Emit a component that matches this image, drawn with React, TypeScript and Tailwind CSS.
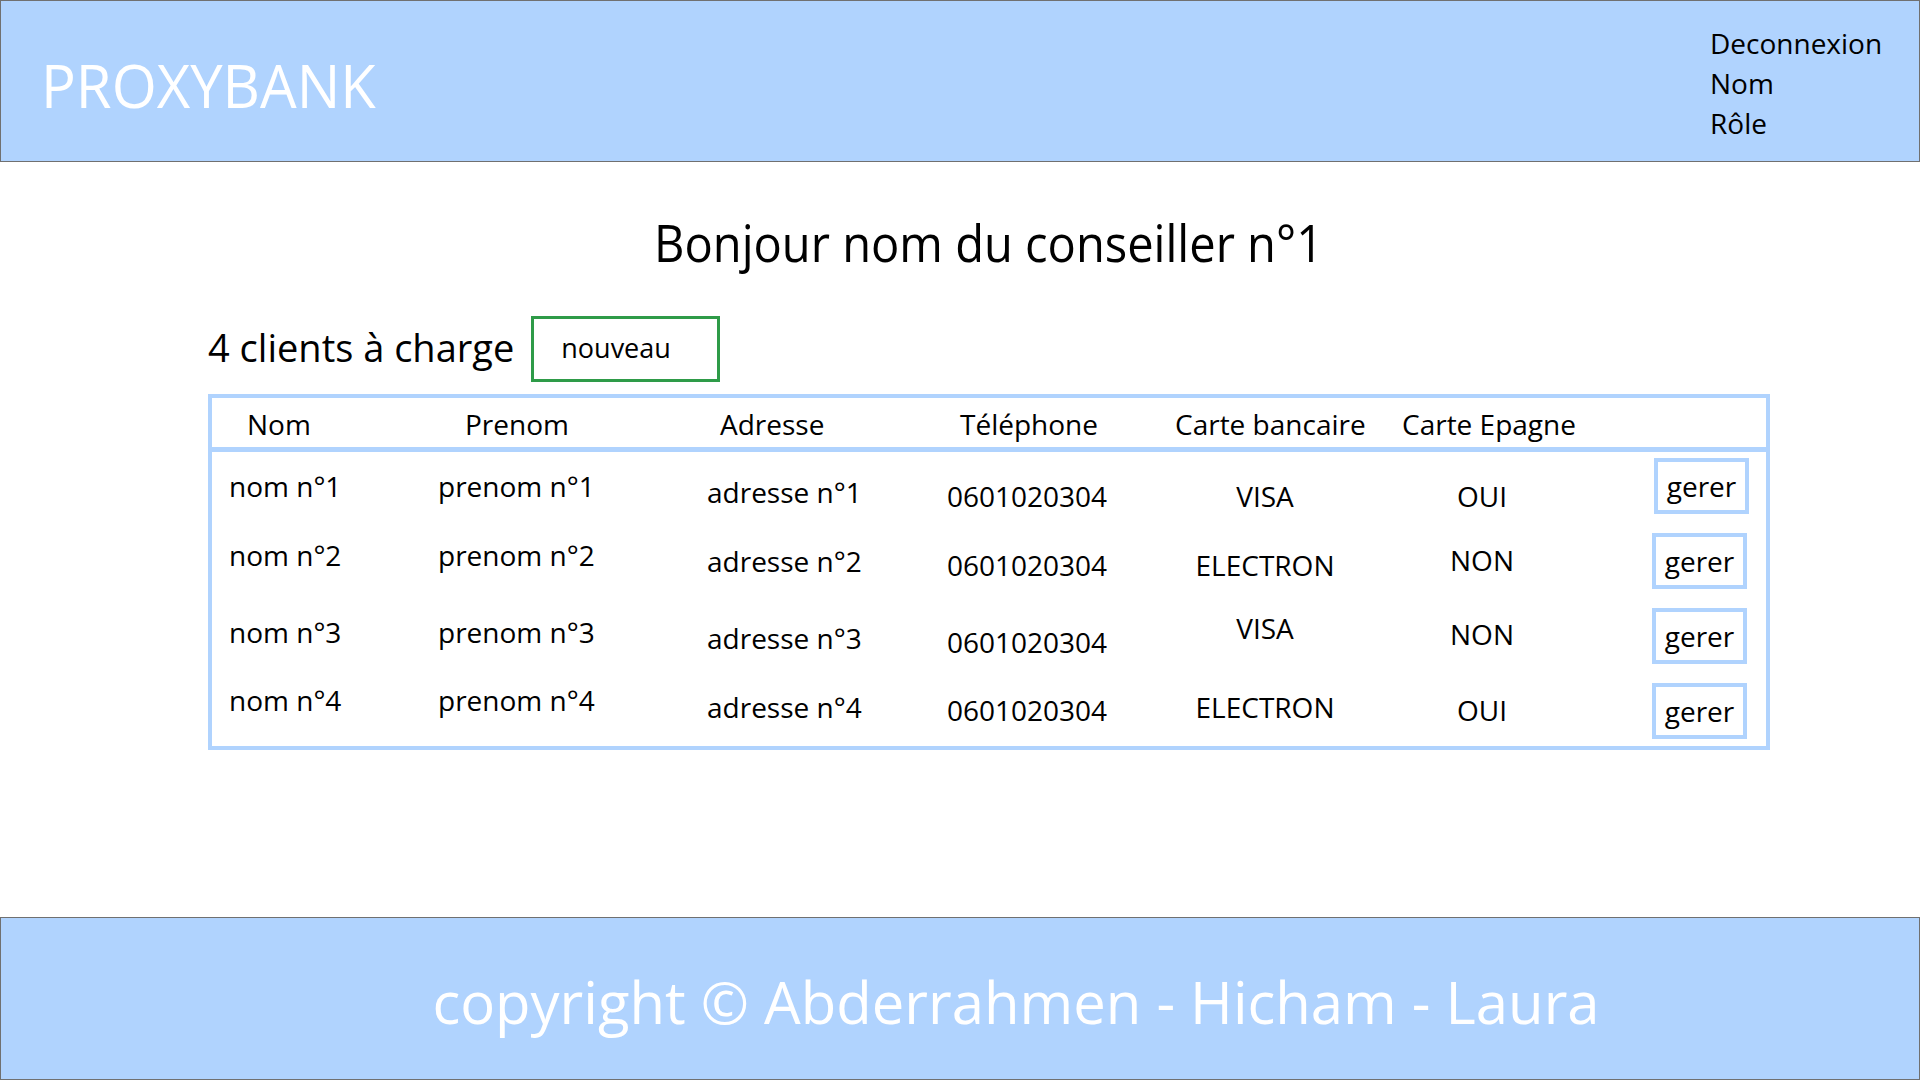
const HEADERS = [
  { label: 'Nom', cls: 'w-[253px] pl-[35px]' },
  { label: 'Prenom', cls: 'w-[255px]' },
  { label: 'Adresse', cls: 'w-[240px]' },
  { label: 'Téléphone', cls: 'w-[215px]' },
  { label: 'Carte bancaire', cls: 'w-[227px]' },
  { label: 'Carte Epagne', cls: 'flex-1' },
];

// vertical offsets follow the mockup, which is not perfectly aligned
const CLIENTS = [
  {
    nom: 'nom n°1', prenom: 'prenom n°1', adresse: 'adresse n°1', tel: '0601020304', carte: 'VISA', epargne: 'OUI',
    mt: ['mt-[14px]', 'mt-[14px]', 'mt-[20px]', 'mt-[24px]', 'mt-[24px]', 'mt-[24px]'], btn: 'ml-[54px]',
  },
  {
    nom: 'nom n°2', prenom: 'prenom n°2', adresse: 'adresse n°2', tel: '0601020304', carte: 'ELECTRON', epargne: 'NON',
    mt: ['mt-[8px]', 'mt-[8px]', 'mt-[14px]', 'mt-[18px]', 'mt-[18px]', 'mt-[13px]'], btn: 'ml-[52px]',
  },
  {
    nom: 'nom n°3', prenom: 'prenom n°3', adresse: 'adresse n°3', tel: '0601020304', carte: 'VISA', epargne: 'NON',
    mt: ['mt-[10px]', 'mt-[10px]', 'mt-[16px]', 'mt-[20px]', 'mt-[6px]', 'mt-[12px]'], btn: 'ml-[52px]',
  },
  {
    nom: 'nom n°4', prenom: 'prenom n°4', adresse: 'adresse n°4', tel: '0601020304', carte: 'ELECTRON', epargne: 'OUI',
    mt: ['mt-[3px]', 'mt-[3px]', 'mt-[10px]', 'mt-[13px]', 'mt-[10px]', 'mt-[13px]'], btn: 'ml-[52px]',
  },
];

function Header() {
  return (
    <header className="h-[162px] bg-[#b0d3fe] border border-[#707070] flex justify-between">
      <div className="pt-[53px] pl-[40px]">
        <span className="inline-block origin-left scale-x-[0.95] text-[61px] leading-none text-white">PROXYBANK</span>
      </div>
      <nav className="pt-[22px] w-[209px] flex flex-col text-[28px] leading-[40px] text-black">
        <span>Deconnexion</span>
        <span>Nom</span>
        <span>Rôle</span>
      </nav>
    </header>
  );
}

function ClientsTable() {
  return (
    <div className="mt-[12px] border-4 border-[#b0d3fe]">
      <div className="h-[54px] pt-[3px] border-b-[5px] border-[#b0d3fe] flex items-center text-[28px] leading-[28px]">
        {HEADERS.map((h) => (
          <span key={h.label} className={h.cls}>{h.label}</span>
        ))}
      </div>
      <div className="pt-[6px] pb-[7px] flex flex-col gap-[19px] text-[28px] leading-[28px]">
        {CLIENTS.map((c) => (
          <div key={c.nom} className="h-[56px] flex items-start">
            <div className={`w-[226px] pl-[17px] ${c.mt[0]}`}>{c.nom}</div>
            <div className={`w-[269px] ${c.mt[1]}`}>{c.prenom}</div>
            <div className={`w-[240px] ${c.mt[2]}`}>{c.adresse}</div>
            <div className={`w-[213px] ${c.mt[3]}`}>{c.tel}</div>
            <div className={`w-[204px] pl-[6px] text-center ${c.mt[4]}`}>{c.carte}</div>
            <div className={`w-[236px] text-center ${c.mt[5]}`}>{c.epargne}</div>
            <div className="flex-1">
              <button
                className={`${c.btn} w-[95px] h-[56px] border-4 border-[#b0d3fe] bg-white flex items-center justify-center text-[28px] leading-none`}
              >
                gerer
              </button>
            </div>
          </div>
        ))}
      </div>
    </div>
  );
}

export default function App() {
  return (
    <div className="w-[1920px] h-[1080px] flex flex-col bg-white text-black font-['Open_Sans',sans-serif] overflow-hidden">
      <Header />
      <main className="flex-1">
        <div className="ml-[208px] w-[1562px]">
          <div className="mt-[54px] text-center">
            <h1 className="inline-block origin-center scale-x-[0.905] text-[52px] leading-none font-normal">
              Bonjour nom du conseiller n°1
            </h1>
          </div>
          <div className="mt-[48px] flex items-center h-[66px]">
            <span className="text-[38px] leading-none -mt-[5px]">4 clients à charge</span>
            <button className="ml-[17px] w-[189px] h-[66px] border-[3px] border-[#2e9b48] text-left pl-[27px] pb-[3px] text-[27px] leading-none bg-white">
              nouveau
            </button>
          </div>
          <ClientsTable />
        </div>
      </main>
      <footer className="h-[163px] bg-[#b0d3fe] border border-[#707070] flex items-center justify-center pl-[112px] pt-[6px]">
        <span className="text-[58px] leading-none text-white">copyright © Abderrahmen - Hicham - Laura</span>
      </footer>
    </div>
  );
}
